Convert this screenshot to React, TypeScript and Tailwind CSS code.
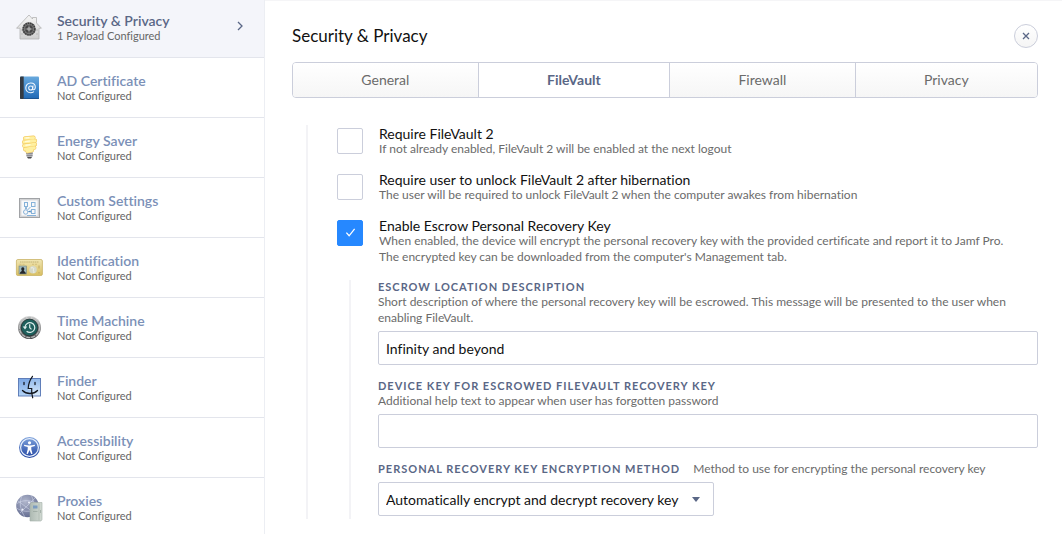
import type { ReactNode } from 'react';

function SecurityIcon() {
  return (
    <svg width="28" height="28" viewBox="0 0 28 28" aria-hidden="true">
      <defs>
        <linearGradient id="house" x1="0" y1="0" x2="0" y2="1">
          <stop offset="0" stopColor="#f6f6f6" />
          <stop offset="1" stopColor="#cfcfcf" />
        </linearGradient>
      </defs>
      <path d="M14 1 1.6 14.2H5V25h19V14.200h2.400L21.500 9V3.500h-4V5z" fill="url(#house)" stroke="#b3b3b3" strokeWidth=".8" strokeLinejoin="round" />
      <path d="M7 15v8M22 15v8" stroke="#b9b9b9" strokeDasharray="2 2" />
      <circle cx="14" cy="15" r="6.700" fill="#777" />
      <circle cx="14" cy="15" r="5.800" fill="none" stroke="#3c3c3c" strokeWidth="1.600" strokeDasharray="1.500 .8" />
      <circle cx="14" cy="15" r="4" fill="#4c4c4c" />
      <circle cx="14" cy="15" r="2.500" fill="#8a8a8a" stroke="#222" strokeWidth=".7" />
      <path d="M14 11.500v7M10.500 15h7" stroke="#bbb" strokeWidth=".7" />
    </svg>
  );
}

function CertificateIcon() {
  return (
    <svg width="28" height="28" viewBox="0 0 28 28" aria-hidden="true">
      <defs>
        <linearGradient id="book" x1="0" y1="0" x2="0" y2="1">
          <stop offset="0" stopColor="#69a9dd" />
          <stop offset=".5" stopColor="#4189cc" />
          <stop offset="1" stopColor="#2068b3" />
        </linearGradient>
      </defs>
      <rect x="5" y="2.500" width="19" height="22.500" rx="1" fill="url(#book)" />
      <path d="M6 2.500H8.700V25H6a1 1 0 0 1-1-1V3.500a1 1 0 0 1 1-1z" fill="#353b42" />
      <path d="M8.700 24.500H24" stroke="#1c4f86" strokeWidth=".8" />
      <g fill="none" stroke="#f3f8fd" strokeWidth="1.100" strokeLinecap="round">
        <circle cx="15.700" cy="14" r="2" />
        <path d="M18 11.800l-.4 3.100c0 1.500 2.700 1.200 2.700-1.600 0-2.600-2-4.300-4.500-4.300-3 0-5 2.300-5 5s2 4.700 4.800 4.700c1.200 0 2.200-.3 3-.8" />
      </g>
    </svg>
  );
}

function BulbIcon() {
  return (
    <svg width="28" height="28" viewBox="0 0 28 28" aria-hidden="true">
      <path d="M11 17h7l-.5 5.500c-.5 1.500-5.500 1.500-6 0z" fill="#b4b4b8" />
      <path d="M11.200 19.500h6.500M11.500 21.500h6" stroke="#85858a" strokeWidth=".8" />
      <path d="M12 23h5l-1 1.500h-3z" fill="#4b4b4e" />
      <g fill="none" strokeLinecap="round">
        <g stroke="#f2c558" strokeWidth="4.200">
          <path d="M10 4.300 18.500 3.700M9 8 20 6.700M9.200 11.800 20 10.200M10.200 15.300 19.300 13.700M12.500 17.300 17 16.300" />
        </g>
        <g stroke="#fff0a0" strokeWidth="3.100">
          <path d="M10 4.300 18.500 3.700M9 8 20 6.700M9.200 11.800 20 10.200M10.200 15.300 19.300 13.700M12.500 17.300 17 16.300" />
        </g>
        <path d="M11 4 14 3.700M10.500 7.600l4-.5M11 11.300l4-.6" stroke="#fffbdc" strokeWidth="1.400" />
      </g>
    </svg>
  );
}

function CustomSettingsIcon() {
  return (
    <svg width="28" height="28" viewBox="0 0 28 28" aria-hidden="true">
      <rect x="4.500" y="4.500" width="20" height="19" fill="#f8f8f9" stroke="#a1a3a6" />
      <rect x="5.700" y="5.700" width="17.600" height="16.600" fill="none" stroke="#d0d1d4" strokeWidth="1.300" />
      <g fill="none" stroke="#86b2d9" strokeWidth="1">
        <rect x="9.500" y="8.500" width="3" height="4" />
        <rect x="16.500" y="8.500" width="3.500" height="4" />
        <rect x="16.500" y="15.500" width="3.500" height="4" />
        <circle cx="10.700" cy="18" r="2.200" />
        <path d="M11 15.500v-3M13 17.500h3.500M12.500 16l3-3M12 21.500h9" />
      </g>
      <path d="M13.500 17.500l2-1.300v2.600zM11 13l1 1.500h-2z" fill="#4d88bd" />
    </svg>
  );
}

function IdentificationIcon() {
  return (
    <svg width="28" height="28" viewBox="0 0 28 28" aria-hidden="true">
      <defs>
        <linearGradient id="card" x1="0" y1="0" x2="0" y2="1">
          <stop offset="0" stopColor="#f0e6b3" />
          <stop offset="1" stopColor="#d9bf62" />
        </linearGradient>
      </defs>
      <rect x="1.400" y="5.500" width="26" height="16" rx="1.500" fill="url(#card)" stroke="#c9b266" strokeWidth=".8" />
      <path d="M5 8h19" stroke="#b7a66a" strokeWidth=".8" strokeDasharray="1.500 .6" />
      <path d="M4.500 10.300h6M17 10.300h6" stroke="#cdb977" strokeWidth=".8" strokeDasharray="2 1" />
      <rect x="4" y="12" width="7.500" height="8" fill="#9eb9bd" stroke="#75827b" strokeWidth=".6" />
      <path d="M4.800 19.700c.2-2 1.600-2.200 2.100-2.700-1-1.500-.9-3.700.9-3.700s1.900 2.200.9 3.700c.5.5 2 .7 2.200 2.700z" fill="#25272b" />
      <circle cx="18" cy="15.800" r="3.800" fill="#d6d9c8" />
      <path d="M16 14c2-.8 3.500.5 2.500 1.500s1.500 2 .2 3.500" stroke="#f3f3e9" fill="none" />
      <path d="M24 11.500v3M24 18v1.500" stroke="#bca761" />
    </svg>
  );
}

function TimeMachineIcon() {
  return (
    <svg width="28" height="28" viewBox="0 0 28 28" aria-hidden="true">
      <defs>
        <linearGradient id="bezel" x1="0" y1="0" x2="0" y2="1">
          <stop offset="0" stopColor="#dcdcdc" />
          <stop offset="1" stopColor="#4a4a4d" />
        </linearGradient>
      </defs>
      <circle cx="14.500" cy="13.500" r="11.500" fill="url(#bezel)" />
      <circle cx="14.500" cy="13.500" r="10.100" fill="none" stroke="#b9bbbb" strokeWidth="1.200" strokeDasharray="4 1" />
      <circle cx="14.500" cy="13.500" r="8.400" fill="#1f605d" stroke="#263334" strokeWidth=".9" />
      <g fill="none" stroke="#dceceb" strokeWidth="1.200">
        <path d="M10 13a4.900 4.900 0 1 1 1.600 4.200" />
        <path d="M14.700 10.300v3.400l1.800 1.700" />
      </g>
      <path d="M7.700 12.500h4.500l-2.200 3z" fill="#dceceb" />
    </svg>
  );
}

function FinderIcon() {
  return (
    <svg width="28" height="28" viewBox="0 0 28 28" aria-hidden="true">
      <defs>
        <linearGradient id="face" x1="0" y1="0" x2="0" y2="1">
          <stop offset="0" stopColor="#7ba6e4" />
          <stop offset="1" stopColor="#b4d4f6" />
        </linearGradient>
        <linearGradient id="profile" x1="0" y1="0" x2="0" y2="1">
          <stop offset="0" stopColor="#91b9eb" />
          <stop offset="1" stopColor="#dcecfb" />
        </linearGradient>
      </defs>
      <rect x="3.500" y="4.500" width="22" height="17.500" fill="url(#face)" />
      <path d="M16 4.500h9.500V22H16.500l-.5-6h-3C13 10.500 14.500 7 16 4.500z" fill="url(#profile)" />
      <rect x="3.500" y="4.500" width="22" height="17.500" fill="none" stroke="#5775b3" strokeWidth=".9" />
      <g fill="none" stroke="#11161f" strokeLinecap="round">
        <path d="M17.500 2.300c-2.700 3.700-4.200 8-4.300 12.200h3.500c-.3 3.200 0 6.300 1 9.300" strokeWidth="1.200" />
        <path d="M9 8.500v2M20 8.500v2" strokeWidth="1.300" />
        <path d="M7.500 16.500c4 4 11 4 15 0" strokeWidth="1.300" />
      </g>
    </svg>
  );
}

function AccessibilityIcon() {
  return (
    <svg width="28" height="28" viewBox="0 0 28 28" aria-hidden="true">
      <defs>
        <linearGradient id="disc" x1="0" y1="0" x2="0" y2="1">
          <stop offset="0" stopColor="#7fa3dc" />
          <stop offset="1" stopColor="#2346a3" />
        </linearGradient>
      </defs>
      <circle cx="14.500" cy="13.500" r="10.500" fill="url(#disc)" />
      <circle cx="14.500" cy="13.500" r="8.900" fill="none" stroke="#e8f0fb" strokeWidth="1.200" />
      <circle cx="14.500" cy="8.800" r="1.600" fill="#fff" />
      <path d="M9.200 10.700c3.500 1 7.100 1 10.600 0l.2 1.300-3.700.9v2.300l1.200 4.500-1.300.4L14.500 16l-1.700 4.100-1.300-.4 1.200-4.500v-2.300l-3.700-.9z" fill="#fff" />
    </svg>
  );
}

function ProxiesIcon() {
  return (
    <svg width="28" height="28" viewBox="0 0 28 28" aria-hidden="true">
      <defs>
        <radialGradient id="globe" cx=".4" cy=".3" r=".8">
          <stop offset="0" stopColor="#b0b6cc" />
          <stop offset="1" stopColor="#5b648a" />
        </radialGradient>
        <linearGradient id="server" x1="0" y1="0" x2="1" y2="0">
          <stop offset="0" stopColor="#aebab3" />
          <stop offset="1" stopColor="#d2dad3" />
        </linearGradient>
      </defs>
      <circle cx="12.500" cy="12" r="11.300" fill="url(#globe)" />
      <g fill="none" stroke="#d9def0" strokeWidth=".5">
        <path d="M2 9.500c6-4 14-4 21 1M1.500 14c6 4 12 4 18 2M7 2c-3 6-2 14 3 21M16 1c3 5 3 10 0 15M3 7l15 11M20 4 5 19" />
      </g>
      <circle cx="14" cy="8.500" r="1" fill="#eef0fa" />
      <circle cx="7.500" cy="15.500" r="1" fill="#eef0fa" />
      <path d="M15 10.500 16 8.500h11v17l-1 1.500H15z" fill="url(#server)" stroke="#a3aea8" strokeWidth=".6" />
      <path d="M24 9.500v17" stroke="#a9b4ad" strokeWidth=".7" />
      <rect x="18" y="11.500" width="4.500" height="3" fill="#7b9bc0" />
      <path d="M18 17.500h4.500M25.500 16v3" stroke="#97a39c" strokeWidth=".7" />
    </svg>
  );
}

type Payload = { name: string; status: string; icon: ReactNode; active?: boolean };

const payloads: Payload[] = [
  { name: 'Security & Privacy', status: '1 Payload Configured', icon: <SecurityIcon />, active: true },
  { name: 'AD Certificate', status: 'Not Configured', icon: <CertificateIcon /> },
  { name: 'Energy Saver', status: 'Not Configured', icon: <BulbIcon /> },
  { name: 'Custom Settings', status: 'Not Configured', icon: <CustomSettingsIcon /> },
  { name: 'Identification', status: 'Not Configured', icon: <IdentificationIcon /> },
  { name: 'Time Machine', status: 'Not Configured', icon: <TimeMachineIcon /> },
  { name: 'Finder', status: 'Not Configured', icon: <FinderIcon /> },
  { name: 'Accessibility', status: 'Not Configured', icon: <AccessibilityIcon /> },
  { name: 'Proxies', status: 'Not Configured', icon: <ProxiesIcon /> },
];

function Sidebar() {
  return (
    <nav aria-label="Payloads" className="w-[265px] shrink-0 overflow-hidden border-r border-[#eceef3]">
      <ul>
        {payloads.map((p) => (
          <li key={p.name}>
            <a
              href="#"
              aria-current={p.active ? 'page' : undefined}
              className={
                'flex items-center gap-[14px] border-b border-[#e3e5ec] pr-5 pb-[14px] pl-[15px] ' +
                (p.active ? 'bg-[#f4f5fa] pt-[13px]' : 'bg-white pt-[15px]')
              }
            >
              <span className="-my-1 shrink-0">{p.icon}</span>
              <span className="min-w-0 flex-1">
                <span
                  className={
                    'block text-[14px] leading-4 font-semibold ' + (p.active ? 'text-[#5a6786]' : 'text-[#7b90b7]')
                  }
                >
                  {p.name}
                </span>
                <span className="block text-[11px] leading-[14px] text-[#666]">{p.status}</span>
              </span>
              {p.active && (
                <svg width="8" height="10" viewBox="0 0 8 10" fill="none" stroke="#5a6786" strokeWidth="1.300" aria-hidden="true" className="mb-1">
                  <path d="M2 1l4 4-4 4" />
                </svg>
              )}
            </a>
          </li>
        ))}
      </ul>
    </nav>
  );
}

const tabs = ['General', 'FileVault', 'Firewall', 'Privacy'];

function Tabs() {
  return (
    <div role="tablist" className="mt-[14px] flex h-9 overflow-hidden rounded border border-[#cbcedb]">
      {tabs.map((t) => {
        const selected = t === 'FileVault';
        return (
          <button
            key={t}
            type="button"
            role="tab"
            aria-selected={selected}
            className={
              'flex-auto border-[#cbcedb] pb-0.5 text-[14px] not-last:border-r ' +
              (selected ? 'bg-white font-bold text-[#5a6786]' : 'bg-linear-to-b from-white to-[#f6f6f6] text-[#6b6b6b]')
            }
          >
            {t}
          </button>
        );
      })}
    </div>
  );
}

function CheckOption({ id, label, checked, children }: { id: string; label: string; checked?: boolean; children: ReactNode }) {
  return (
    <div className="flex items-start gap-4">
      <span className="mt-px grid shrink-0">
        <input
          id={id}
          type="checkbox"
          defaultChecked={checked}
          aria-describedby={id + '-help'}
          className="peer col-start-1 row-start-1 size-[26px] appearance-none rounded-xs border border-[#cbcedb] bg-white checked:border-[#2688ff] checked:bg-[#2688ff]"
        />
        <svg
          viewBox="0 0 12 10"
          fill="none"
          stroke="#fff"
          strokeWidth="1.400"
          aria-hidden="true"
          className="pointer-events-none invisible col-start-1 row-start-1 w-[11px] self-center justify-self-center peer-checked:visible"
        >
          <path d="M1.500 5l3 3.500L10.500 1" />
        </svg>
      </span>
      <div className="min-w-0">
        <label htmlFor={id} className="block text-[14px] leading-[14px] text-[#111]">
          {label}
        </label>
        <p id={id + '-help'} className="text-[12px] leading-4 text-[#6b6b6b]">
          {children}
        </p>
      </div>
    </div>
  );
}

const fieldLabel = 'block text-[11px] leading-[14px] font-bold tracking-[1px] uppercase text-[#5a6786]';
const help = 'text-[12px] leading-4 text-[#6b6b6b]';
const control = 'h-[34px] rounded-xs border border-[#cbcedb] bg-white px-[7px] text-[14px] text-[#111]';

function TextField({ id, label, hint, value }: { id: string; label: string; hint: string; value?: string }) {
  return (
    <div>
      <label htmlFor={id} className={fieldLabel}>
        {label}
      </label>
      <p id={id + '-help'} className={help}>
        {hint}
      </p>
      <input id={id} type="text" defaultValue={value} aria-describedby={id + '-help'} className={'mt-[5px] block w-full ' + control} />
    </div>
  );
}

export default function App() {
  return (
    <div className="flex h-screen overflow-hidden bg-white font-['Lato','Open_Sans',sans-serif] [font-variant-ligatures:none]">
      <Sidebar />
      <main className="min-w-0 flex-1 overflow-hidden border-t border-[#f5f5f7] pt-[23px] pr-6 pl-[27px]">
        <header className="flex h-6 items-center justify-between">
          <h1 className="text-[17px] leading-6 text-[#111]">Security &amp; Privacy</h1>
          <button
            type="button"
            aria-label="Close"
            className="flex size-6 items-center justify-center rounded-full border border-[#cbcedb] bg-linear-to-b from-white to-[#f5f5f5]"
          >
            <svg width="8" height="8" viewBox="0 0 8 8" stroke="#5a6786" strokeWidth="1.300" aria-hidden="true">
              <path d="M1 1l6 6M7 1l-6 6" />
            </svg>
          </button>
        </header>
        <Tabs />
        <div className="mt-[27px] ml-[14px] border-l-2 border-[#f3f3f6] pt-0.5 pl-[29px]">
          <div className="flex flex-col gap-4">
            <CheckOption id="require" label="Require FileVault 2">
              If not already enabled, FileVault 2 will be enabled at the next logout
            </CheckOption>
            <CheckOption id="hibernation" label="Require user to unlock FileVault 2 after hibernation">
              The user will be required to unlock FileVault 2 when the computer awakes from hibernation
            </CheckOption>
            <CheckOption id="escrow" label="Enable Escrow Personal Recovery Key" checked>
              When enabled, the device will encrypt the personal recovery key with the provided certificate and report it to Jamf Pro.
              <br />
              The encrypted key can be downloaded from the computer's Management tab.
            </CheckOption>
          </div>
          <div className="mt-[15px] ml-3 flex flex-col gap-[14px] border-l-2 border-[#f3f3f6] pb-[3px] pl-[27px]">
            <TextField
              id="location"
              label="Escrow Location Description"
              hint="Short description of where the personal recovery key will be escrowed. This message will be presented to the user when enabling FileVault."
              value="Infinity and beyond"
            />
            <TextField
              id="device-key"
              label="Device Key for Escrowed FileVault Recovery Key"
              hint="Additional help text to appear when user has forgotten password"
            />
            <div>
              <div className="flex h-[14px] items-center gap-[13px]">
                <label htmlFor="method" className={fieldLabel}>
                  Personal Recovery Key Encryption Method
                </label>
                <p id="method-help" className={help}>
                  Method to use for encrypting the personal recovery key
                </p>
              </div>
              <div className="mt-1.5 grid w-[336px]">
                <select id="method" aria-describedby="method-help" className={'col-start-1 row-start-1 w-full appearance-none ' + control}>
                  <option>Automatically encrypt and decrypt recovery key</option>
                </select>
                <svg
                  viewBox="0 0 8 5"
                  aria-hidden="true"
                  className="pointer-events-none col-start-1 row-start-1 mr-[14px] w-2 self-center justify-self-end fill-[#5a6786]"
                >
                  <path d="M0 0h8L4 5z" />
                </svg>
              </div>
            </div>
          </div>
        </div>
      </main>
    </div>
  );
}
